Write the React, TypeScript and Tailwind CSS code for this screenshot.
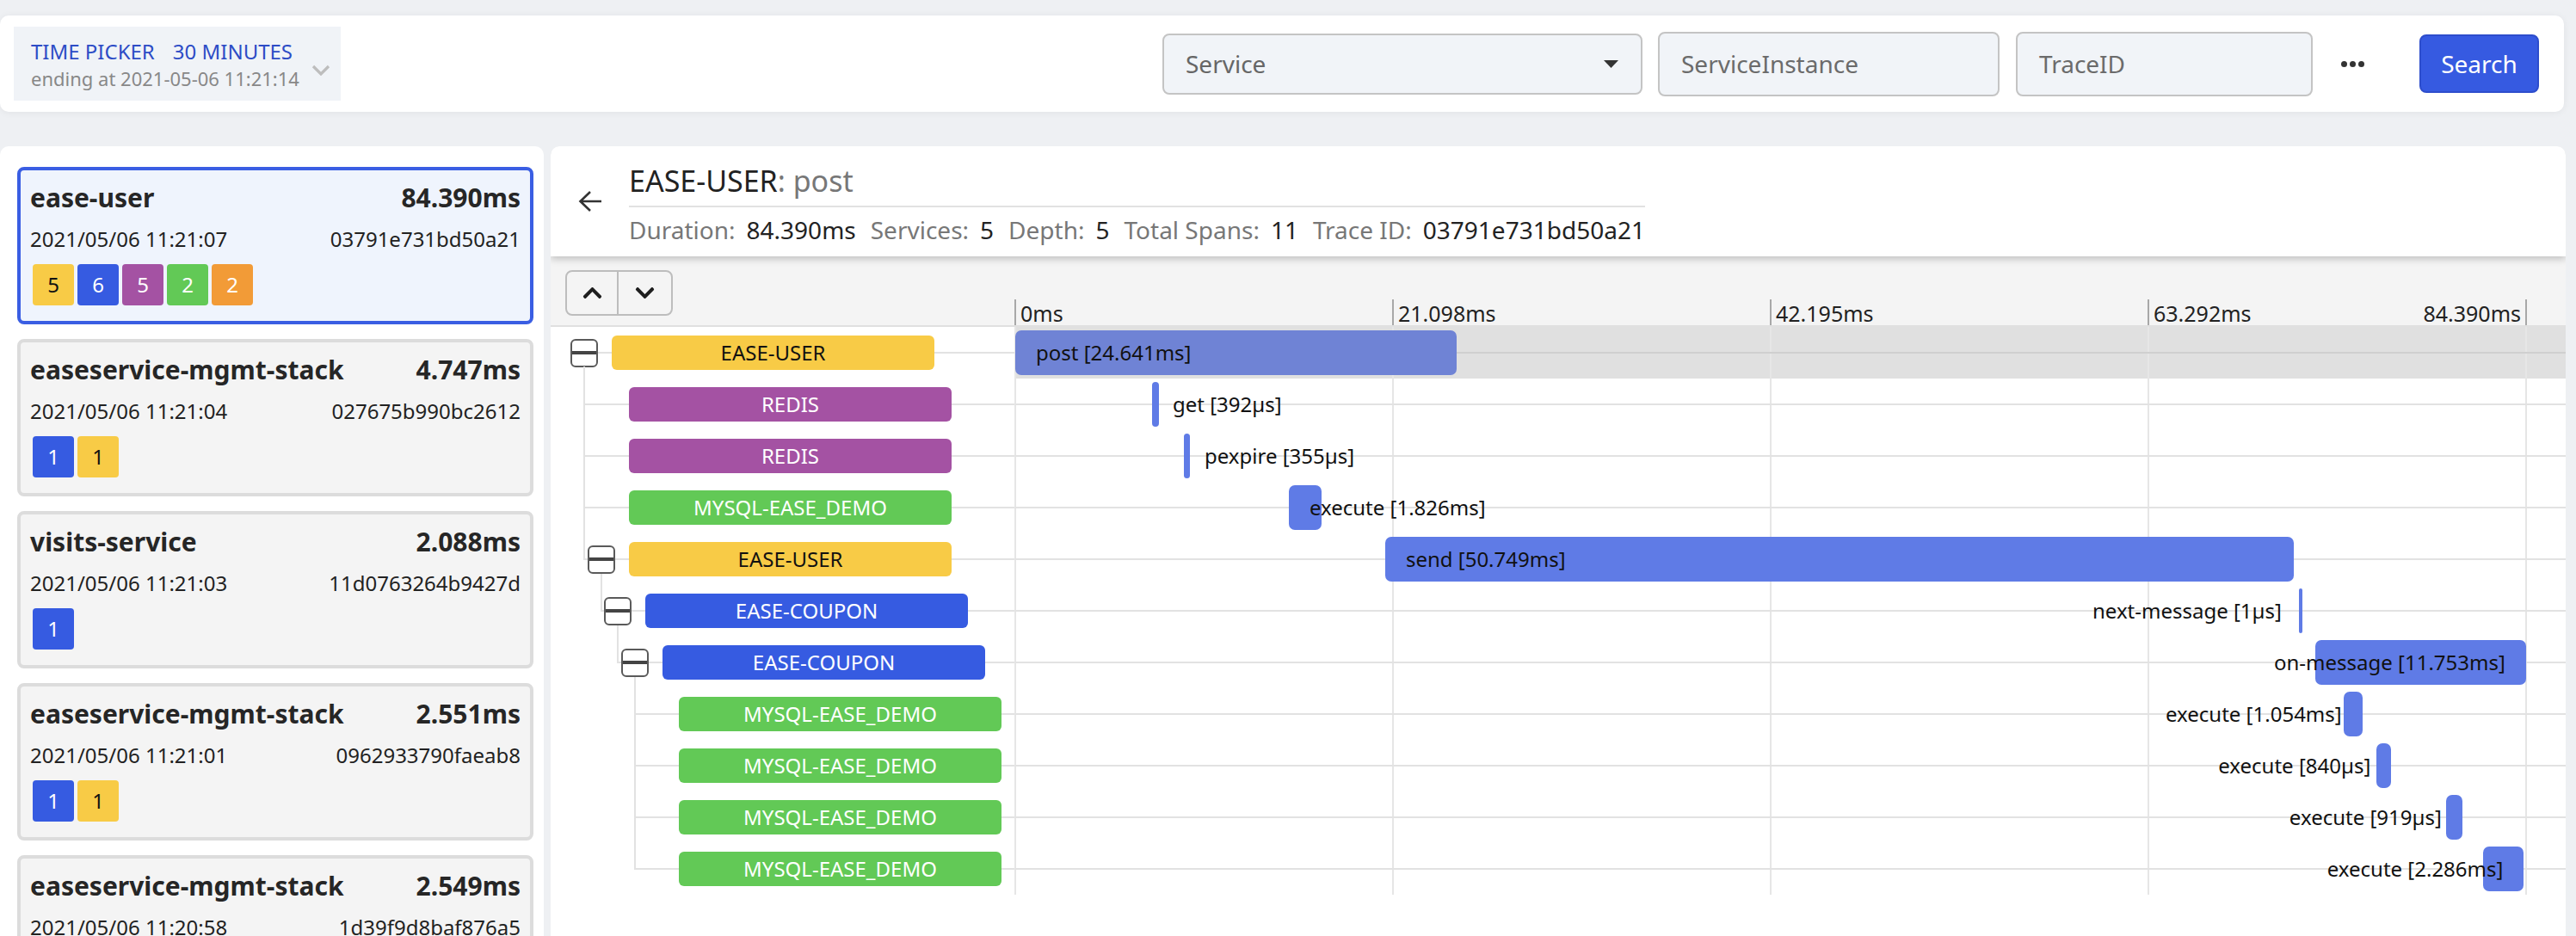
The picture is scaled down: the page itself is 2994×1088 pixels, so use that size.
import React from 'react';
import { FaChevronUp, FaChevronDown } from 'react-icons/fa';

type Tag = [string, 'y' | 'b' | 'p' | 'g' | 'o'];

const TAG_CLASS: Record<string, string> = {
  y: 'bg-[#f8cb46] text-[#111]',
  b: 'bg-[#365be1] text-white',
  p: 'bg-[#a452a3] text-white',
  g: 'bg-[#62c956] text-white',
  o: 'bg-[#f29b37] text-white',
};

const traces: { name: string; dur: string; time: string; id: string; tags: Tag[]; selected?: boolean }[] = [
  { name: 'ease-user', dur: '84.390ms', time: '2021/05/06 11:21:07', id: '03791e731bd50a21', tags: [['5', 'y'], ['6', 'b'], ['5', 'p'], ['2', 'g'], ['2', 'o']], selected: true },
  { name: 'easeservice-mgmt-stack', dur: '4.747ms', time: '2021/05/06 11:21:04', id: '027675b990bc2612', tags: [['1', 'b'], ['1', 'y']] },
  { name: 'visits-service', dur: '2.088ms', time: '2021/05/06 11:21:03', id: '11d0763264b9427d', tags: [['1', 'b']] },
  { name: 'easeservice-mgmt-stack', dur: '2.551ms', time: '2021/05/06 11:21:01', id: '0962933790faeab8', tags: [['1', 'b'], ['1', 'y']] },
  { name: 'easeservice-mgmt-stack', dur: '2.549ms', time: '2021/05/06 11:20:58', id: '1d39f9d8baf876a5', tags: [['1', 'b'], ['1', 'y']] },
];

type Span = {
  svc: string;
  kind: 'y' | 'b' | 'p' | 'g';
  depth: number;
  toggle?: boolean;
  lineStart: number;
  start: number;
  dur: number;
  label: string;
  align: 'left' | 'right';
};

const spans: Span[] = [
  { svc: 'EASE-USER', kind: 'y', depth: 0, toggle: true, lineStart: 39, start: 0, dur: 24.641, label: 'post [24.641ms]', align: 'left' },
  { svc: 'REDIS', kind: 'p', depth: 1, lineStart: 39, start: 7.64, dur: 0.392, label: 'get [392µs]', align: 'left' },
  { svc: 'REDIS', kind: 'p', depth: 1, lineStart: 39, start: 9.42, dur: 0.355, label: 'pexpire [355µs]', align: 'left' },
  { svc: 'MYSQL-EASE_DEMO', kind: 'g', depth: 1, lineStart: 39, start: 15.28, dur: 1.826, label: 'execute [1.826ms]', align: 'left' },
  { svc: 'EASE-USER', kind: 'y', depth: 1, toggle: true, lineStart: 39, start: 20.66, dur: 50.749, label: 'send [50.749ms]', align: 'left' },
  { svc: 'EASE-COUPON', kind: 'b', depth: 2, toggle: true, lineStart: 59, start: 71.7, dur: 0.001, label: 'next-message [1µs]', align: 'right' },
  { svc: 'EASE-COUPON', kind: 'b', depth: 3, toggle: true, lineStart: 78, start: 72.63, dur: 11.753, label: 'on-message [11.753ms]', align: 'right' },
  { svc: 'MYSQL-EASE_DEMO', kind: 'g', depth: 4, lineStart: 98, start: 74.19, dur: 1.054, label: 'execute [1.054ms]', align: 'right' },
  { svc: 'MYSQL-EASE_DEMO', kind: 'g', depth: 4, lineStart: 98, start: 76.02, dur: 0.84, label: 'execute [840µs]', align: 'right' },
  { svc: 'MYSQL-EASE_DEMO', kind: 'g', depth: 4, lineStart: 98, start: 79.91, dur: 0.919, label: 'execute [919µs]', align: 'right' },
  { svc: 'MYSQL-EASE_DEMO', kind: 'g', depth: 4, lineStart: 98, start: 81.98, dur: 2.286, label: 'execute [2.286ms]', align: 'right' },
];

const BOX_CLASS: Record<string, string> = {
  y: 'bg-[#f8cb46] text-[#111]',
  b: 'bg-[#365be1] text-white',
  p: 'bg-[#a452a3] text-white',
  g: 'bg-[#62c956] text-white',
};

const BOX_LEFT = [71, 91, 110, 130, 149];
const TL_WIDTH = 1756;
const TOTAL = 84.39;
const SCALE = TL_WIDTH / TOTAL;
const TICKS = [0, 439, 878, 1317, 1756];
const TICK_LABELS = ['0ms', '21.098ms', '42.195ms', '63.292ms', '84.390ms'];

function TraceCard({ t }: { t: (typeof traces)[number] }) {
  return (
    <div
      className={`h-[183px] shrink-0 rounded-[8px] border-[4px] px-[11px] pt-[12px] ${
        t.selected ? 'border-[#3a5ee3] bg-[#eff4fd]' : 'border-[#dcdcdc] bg-[#f4f4f4]'
      }`}
    >
      <div className="flex h-[40px] justify-between text-[30px] font-bold leading-[40px] text-[#262626]">
        <span>{t.name}</span>
        <span>{t.dur}</span>
      </div>
      <div className="mt-[12px] flex h-[32px] justify-between text-[24px] leading-[32px] text-[#222]">
        <span>{t.time}</span>
        <span>{t.id}</span>
      </div>
      <div className="ml-[3px] mt-[13px] flex gap-[4px]">
        {t.tags.map((tg, i) => (
          <div
            key={i}
            className={`flex h-[48px] w-[48px] items-center justify-center rounded-[4px] text-[24px] ${TAG_CLASS[tg[1]]}`}
          >
            {tg[0]}
          </div>
        ))}
      </div>
    </div>
  );
}

function Header() {
  return (
    <div className="mr-[14px] flex h-[112px] shrink-0 items-center rounded-[10px] bg-white pl-[16px] pr-[29px] shadow-[0_1px_8px_rgba(0,0,0,0.06)]">
      <div className="flex h-[86px] w-[380px] bg-[#f0f3f7] pl-[20px]">
        <div className="pt-[14px]">
          <div className="flex h-[30px] text-[24px] leading-[30px] text-[#2d4cc6]">
            <span>TIME PICKER</span>
            <span className="ml-[21px]">30 MINUTES</span>
          </div>
          <div className="mt-[2px] h-[28px] text-[22px] leading-[28px] text-[#888]">ending at 2021-05-06 11:21:14</div>
        </div>
        <svg className="ml-[14px] mt-[44px]" width="22" height="13" viewBox="0 0 22 13">
          <path d="M2 2 L11 11 L20 2" fill="none" stroke="#bdbdbd" strokeWidth="3.2" />
        </svg>
      </div>
      <div className="flex-1" />
      <div className="flex h-[71px] w-[558px] items-center justify-between rounded-[8px] border-2 border-[#c4c4c4] bg-[#f1f4f8] pl-[25px] pr-[26px] text-[28px] text-[#666]">
        <span>Service</span>
        <svg width="17" height="9" viewBox="0 0 17 9">
          <path d="M0 0 H17 L8.5 9 Z" fill="#333" />
        </svg>
      </div>
      <div className="ml-[18px] flex h-[75px] w-[397px] items-center rounded-[8px] border-2 border-[#c4c4c4] bg-[#f1f4f8] pl-[25px] text-[28px] text-[#6b6b6b]">
        ServiceInstance
      </div>
      <div className="ml-[19px] flex h-[75px] w-[345px] items-center rounded-[8px] border-2 border-[#c4c4c4] bg-[#f1f4f8] pl-[25px] text-[28px] text-[#6b6b6b]">
        TraceID
      </div>
      <div className="ml-[33px] flex w-[27px] gap-[3px]">
        <span className="h-[7px] w-[7px] rounded-full bg-[#333]" />
        <span className="h-[7px] w-[7px] rounded-full bg-[#333]" />
        <span className="h-[7px] w-[7px] rounded-full bg-[#333]" />
      </div>
      <div className="ml-[64px] flex h-[68px] w-[139px] items-center justify-center rounded-[8px] border-2 border-[#2d4dcc] bg-[#365ae1] text-[28px] text-white">
        Search
      </div>
    </div>
  );
}

function TraceHeader() {
  return (
    <div className="relative z-10 flex h-[128px] shrink-0 items-center rounded-t-[10px] bg-white pl-[32px] shadow-[0_3px_8px_rgba(0,0,0,0.22)]">
      <svg width="28" height="26" viewBox="0 0 28 26" className="mr-[31px]">
        <path d="M14 2 L2.5 13 L14 24 M2.5 13 H27" fill="none" stroke="#333" strokeWidth="2.6" />
      </svg>
      <div className="self-start pt-[18px]">
        <div className="w-fit">
          <div className="h-[53px] border-b-2 border-[#e2e2e2] pb-[9px] text-[34px] leading-[44px] text-[#222]">
            EASE-USER<span className="text-[#777]">: post</span>
          </div>
          <div className="mt-[8px] flex h-[36px] whitespace-nowrap text-[28px] leading-[36px]">
            {[
              ['Duration:', '84.390ms'],
              ['Services:', '5'],
              ['Depth:', '5'],
              ['Total Spans:', '11'],
              ['Trace ID:', '03791e731bd50a21'],
            ].map(([k, v], i, arr) => (
              <span key={k} className={i < arr.length - 1 ? 'mr-[17px]' : ''}>
                <span className="text-[#777]">{k}</span>
                <span className="ml-[13px] text-[#222]">{v}</span>
              </span>
            ))}
          </div>
        </div>
      </div>
    </div>
  );
}

function Toolbar() {
  return (
    <div className="flex h-[82px] shrink-0 border-b-2 border-[#e0e0e0] bg-[#f4f4f4]">
      <div className="w-[540px] shrink-0 pl-[17px] pt-[16px]">
        <div className="flex h-[53px] w-[125px] rounded-[8px] border-2 border-[#bdbdbd]">
          <div className="flex w-[60px] items-center justify-center border-r-2 border-[#bdbdbd] text-[#1e1e1e]">
            <FaChevronUp size={25} />
          </div>
          <div className="flex flex-1 items-center justify-center text-[#1e1e1e]">
            <FaChevronDown size={25} />
          </div>
        </div>
      </div>
      <div className="relative flex-1">
        {TICKS.map((x, i) => (
          <React.Fragment key={i}>
            <div className="absolute bottom-0 top-[50px] w-[2px] bg-[#a8a8a8]" style={{ left: x - 1 }} />
            <div
              className="absolute top-[51px] whitespace-nowrap text-[25px] leading-[30px] text-[#222]"
              style={i === TICKS.length - 1 ? { left: x - 6, transform: 'translateX(-100%)' } : { left: x + 6 }}
            >
              {TICK_LABELS[i]}
            </div>
          </React.Fragment>
        ))}
      </div>
    </div>
  );
}

function Rows() {
  return (
    <div className="relative">
      {spans.map((s, i) => {
        const boxLeft = BOX_LEFT[s.depth];
        const barLeft = s.start * SCALE;
        const barW = Math.max(s.dur * SCALE, 4);
        const barEnd = barLeft + barW;
        return (
          <div key={i} className="flex h-[60px]">
            <div className="relative flex w-[540px] shrink-0 items-center" style={{ paddingLeft: boxLeft - 48 }}>
              <div className="absolute right-0 top-[29px] h-[2px] bg-[#e2e2e2]" style={{ left: s.lineStart - 1 }} />
              {s.toggle ? (
                <div className="relative mr-[16px] flex h-[33px] w-[32px] items-center rounded-[6px] border-2 border-[#5a5a5a] bg-white">
                  <div className="h-[4px] w-full bg-[#444]" />
                </div>
              ) : (
                <div className="mr-[16px] w-[32px]" />
              )}
              <div
                className={`relative flex h-[40px] w-[375px] items-center justify-center rounded-[6px] text-[24px] ${BOX_CLASS[s.kind]}`}
              >
                {s.svc}
              </div>
            </div>
            <div className={`relative flex-1 ${i === 0 ? 'bg-[#e0e0e0]' : ''}`}>
              {TICKS.map((x, j) => (
                <div key={j} className="absolute bottom-0 top-0 w-[2px] bg-[#e6e6e6]" style={{ left: x - 1 }} />
              ))}
              <div className={`absolute left-0 right-0 top-[29px] h-[2px] ${i === 0 ? 'bg-[#cfcfcf]' : 'bg-[#e2e2e2]'}`} />
              <div
                className={`absolute top-[4px] h-[52px] rounded-[7px] ${i === 0 ? 'bg-[#6f83d5]' : 'bg-[#5f7be6]'}`}
                style={{ left: barLeft, width: barW }}
              />
              <div
                className="absolute top-0 flex h-[60px] items-center whitespace-nowrap text-[24px] text-[#111]"
                style={s.align === 'left' ? { left: barLeft + 24 } : { left: barEnd - 24, transform: 'translateX(-100%)' }}
              >
                {s.label}
              </div>
            </div>
          </div>
        );
      })}
      <div className="absolute w-[2px] bg-[#e2e2e2]" style={{ left: 38, top: 46, height: 224 }} />
      <div className="absolute w-[2px] bg-[#e2e2e2]" style={{ left: 58, top: 287, height: 43 }} />
      <div className="absolute w-[2px] bg-[#e2e2e2]" style={{ left: 77, top: 347, height: 43 }} />
      <div className="absolute w-[2px] bg-[#e2e2e2]" style={{ left: 97, top: 407, height: 223 }} />
    </div>
  );
}

export default function App() {
  return (
    <div className="flex h-[1088px] w-[2994px] flex-col overflow-hidden bg-[#eef0f3] pt-[18px] font-['Noto_Sans',sans-serif]">
      <Header />
      <div className="mt-[40px] flex min-h-0 flex-1">
        <div className="flex w-[632px] shrink-0 flex-col gap-[17px] overflow-hidden rounded-t-[10px] bg-white pl-[20px] pr-[12px] pt-[24px]">
          {traces.map((t, i) => (
            <TraceCard key={i} t={t} />
          ))}
        </div>
        <div className="ml-[8px] mr-[12px] flex min-w-0 flex-1 flex-col overflow-hidden rounded-t-[10px] bg-white">
          <TraceHeader />
          <Toolbar />
          <Rows />
        </div>
      </div>
    </div>
  );
}
